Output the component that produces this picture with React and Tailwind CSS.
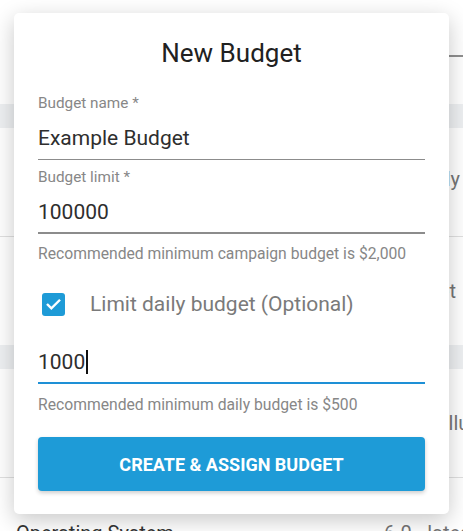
export default function App() {
  return (
    <div className="relative h-[531px] w-[463px] overflow-hidden bg-white font-['Roboto',sans-serif]">
      {/* page behind the dialog */}
      <div className="flex h-[57px] items-end">
        <div className="ml-auto w-[200px] border-b-2 border-[#8f8f8f]" />
      </div>
      <div className="h-[47px]" />
      <div className="h-[24px] bg-[#eef0f2]" />
      <div className="flex h-[109px] items-center justify-end border-b border-[#e0e0e0] pb-[7px] pr-[3px] text-[20px] leading-[28px] text-[#757575]">
        Monthly
      </div>
      <div className="flex h-[108px] items-center justify-end pr-[7px] text-[20px] leading-[28px] text-[#757575]">
        Budget
      </div>
      <div className="h-[24px] bg-[#eef0f2]" />
      <div className="flex h-[109px] items-center whitespace-nowrap border-b border-[#e0e0e0] text-[20px] leading-[28px] text-[#757575]">
        <span className="ml-[425px]">Cellular</span>
      </div>
      <div className="flex items-start whitespace-nowrap pt-[41px] text-[20px] leading-[28px]">
        <span className="ml-[16px] w-[368px] shrink-0 text-[#333]">Operating System</span>
        <span className="text-[#757575]">6.0 - latest</span>
      </div>

      {/* dialog */}
      <div className="absolute left-[14px] top-[13px] w-[435px] rounded-[5px] bg-white px-[24px] pb-[23px] pt-[24px] shadow-[0_6px_22px_rgba(0,0,0,0.22)]">
        <h1 className="text-center text-[26px] font-normal leading-[32px] text-[#212121]">New Budget</h1>

        <div className="mt-[24px] text-[15.3px] leading-[20px] text-[#878787]">Budget name *</div>
        <div className="border-b border-[#8c8c8c] pb-[7px] pt-[11px] text-[21px] leading-[28px] text-[#2e2e2e]">
          Example Budget
        </div>

        <div className="mt-[7px] text-[15.3px] leading-[20px] text-[#878787]">Budget limit *</div>
        <div className="border-b-2 border-[#8c8c8c] pb-[6px] pt-[11px] text-[21px] leading-[28px] text-[#2e2e2e]">
          100000
        </div>
        <div className="mt-[10px] text-[15.7px] leading-[20px] text-[#878787]">
          Recommended minimum campaign budget is $2,000
        </div>

        <div className="mt-[26px] flex h-[28px] items-center">
          <div className="ml-[4px] flex h-[23px] w-[23px] items-center justify-center rounded-[3px] bg-[#1e9bd7]">
            <svg width="17" height="17" viewBox="0 0 24 24" fill="none">
              <path d="M4 12.5l5 5L20 6.5" stroke="white" strokeWidth="3.4" strokeLinecap="square" />
            </svg>
          </div>
          <span className="ml-[25px] text-[21px] leading-[28px] text-[#7a7a7a]">Limit daily budget (Optional)</span>
        </div>

        <div className="mt-[30px] flex items-center border-b-2 border-[#1e90d6] pb-[6px] text-[21px] leading-[28px] text-[#2e2e2e]">
          <span>1000</span>
          <span className="ml-[1px] h-[24px] w-[2px] bg-[#111]" />
        </div>
        <div className="mt-[11px] text-[15.7px] leading-[20px] text-[#878787]">
          Recommended minimum daily budget is $500
        </div>

        <button className="mt-[22px] flex h-[54px] w-full items-center justify-center rounded-[4px] bg-[#1e9bd7] text-[18px] font-bold text-white shadow-[0_2px_4px_rgba(0,0,0,0.2)]">
          CREATE &amp; ASSIGN BUDGET
        </button>
      </div>
    </div>
  )
}
